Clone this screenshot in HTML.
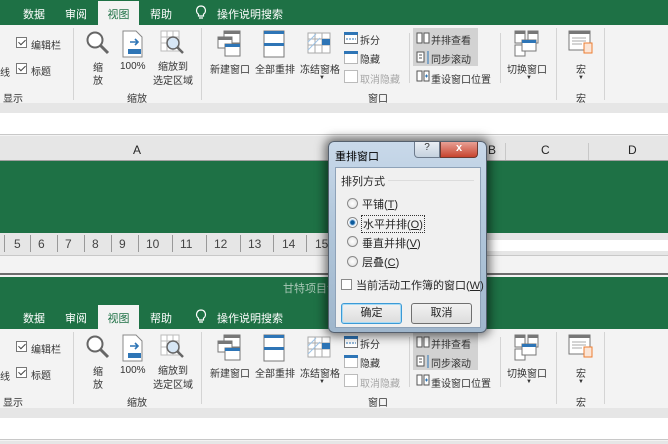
<!DOCTYPE html>
<html><head><meta charset="utf-8"><style>
*{margin:0;padding:0;box-sizing:border-box}
body{width:668px;height:444px;overflow:hidden;position:relative;background:#f3f3f3;font-family:"Liberation Sans","Noto Sans CJK SC",sans-serif;font-size:11px;color:#262626}
.a{position:absolute;white-space:nowrap}
.g{background:#1e7145}
.rb{position:absolute;left:0;width:668px;height:104px}
.tabs{position:absolute;left:0;top:0;width:668px;height:25px;background:#1e7145;color:#fff;font-size:11px}
.tabs span{position:absolute;top:6px}
.sel{position:absolute;left:98px;top:1px;width:41px;height:24px;background:#f3f3f3;color:#1e7145;text-align:center;padding-top:5px}
.ri{position:absolute;left:0;top:25px;width:668px;height:78px;background:#f3f3f3;font-size:10px;color:#333}
.sep{position:absolute;top:3px;width:1px;height:72px;background:#d4d4d4}
.cb{position:absolute;width:11px;height:11px;border:1px solid #777;background:#fff}
.cb:after{content:"";position:absolute;left:3px;top:0px;width:3px;height:6px;border:solid #444;border-width:0 1px 1px 0;transform:rotate(45deg)}
.gray{color:#a6a6a6}
.dlg{position:absolute;left:328px;top:141px;width:159px;height:192px;border:1px solid #55606e;border-radius:6px;background:linear-gradient(#c9d9ea,#b3c8dc 40%,#9fb6cc);box-shadow:0 0 10px 3px rgba(0,0,0,.55)}
.rd{position:absolute;width:11px;height:11px;border-radius:50%;border:1px solid #8a8a8a;background:radial-gradient(#fff,#ddd)}
.btn{position:absolute;width:61px;height:21px;border:1px solid #707070;border-radius:3px;background:linear-gradient(#f2f2f2,#dcdcdc);text-align:center;line-height:19px;font-size:11px}
.dd{font-size:6px}
</style></head><body>

<div class="rb" style="top:0">
 <div class="tabs"><span style="left:23px">数据</span><span style="left:65px">审阅</span><div class="sel">视图</div><span style="left:150px">帮助</span><svg class="a" style="left:195px;top:5px" width="12" height="16"><path d="M6 1a4.5 4.5 0 0 0-2.5 8.2V11h5V9.2A4.5 4.5 0 0 0 6 1zM4 13h4" stroke="#fff" fill="none" stroke-width="1.2"/></svg><span style="left:217px">操作说明搜索</span></div>
 <div class="ri">
  <span class="a" style="left:0;top:39px">线</span>
  <div class="cb" style="left:16px;top:12px"></div><span class="a" style="left:31px;top:12px">编辑栏</span>
  <div class="cb" style="left:16px;top:38px"></div><span class="a" style="left:31px;top:38px">标题</span>
  <span class="a" style="left:3px;top:65px">显示</span>
  <div class="sep" style="left:73px"></div>
  <svg class="a" style="left:85px;top:5px" width="26" height="26"><circle cx="10" cy="10" r="7.5" fill="#fff" stroke="#666" stroke-width="2"/><path d="M15 15 L23 23" stroke="#666" stroke-width="3"/></svg>
  <span class="a" style="left:93px;top:37px;line-height:13px">缩<br>放</span>
  <svg class="a" style="left:121px;top:5px" width="24" height="28"><path d="M2 1h13l6 6v20H2z" fill="#fff" stroke="#888"/><path d="M9 12h8m-3-3 3 3-3 3" stroke="#2e75b6" stroke-width="1.6" fill="none"/><rect x="7" y="19" width="13" height="5" fill="#2e75b6"/></svg>
  <span class="a" style="left:120px;top:36px">100%</span>
  <svg class="a" style="left:160px;top:5px" width="26" height="26"><path d="M1 1h18v20H1z M1 7h18 M1 13h18 M7 1v20 M13 1v20" stroke="#bbb" fill="#fff"/><circle cx="13" cy="13" r="6" fill="#d6e6f5" stroke="#666" stroke-width="1.5"/><path d="M17 17l6 6" stroke="#666" stroke-width="2.5"/></svg>
  <span class="a" style="left:153px;top:36px;line-height:14px;text-align:center">缩放到<br>选定区域</span>
  <span class="a" style="left:127px;top:65px">缩放</span>
  <div class="sep" style="left:201px"></div>
  <svg class="a" style="left:217px;top:5px" width="25" height="27"><rect x="7" y="1" width="16" height="12" fill="#fff" stroke="#777"/><rect x="7" y="1" width="16" height="3" fill="#777"/><rect x="1" y="7" width="14" height="11" fill="#fff" stroke="#777"/><rect x="1" y="7" width="14" height="3" fill="#777"/><rect x="8" y="14" width="15" height="12" fill="#fff" stroke="#777"/><rect x="8" y="14" width="15" height="3" fill="#2e75b6"/></svg>
  <span class="a" style="left:210px;top:36px">新建窗口</span>
  <svg class="a" style="left:263px;top:5px" width="22" height="28"><rect x="1" y="1" width="20" height="26" fill="#fff" stroke="#777"/><rect x="1" y="1" width="20" height="3" fill="#2e75b6"/><rect x="1" y="13" width="20" height="3" fill="#2e75b6"/></svg>
  <span class="a" style="left:255px;top:36px">全部重排</span>
  <svg class="a" style="left:307px;top:5px" width="24" height="26"><path d="M1 3h22v20H1z M1 9h22 M1 15h22 M8 3v20 M15 3v20" stroke="#aaa" fill="#fff"/><rect x="15" y="9" width="8" height="6" fill="#2e75b6"/><path d="M1 12l8-8M1 20l12-12" stroke="#9ec3e6"/></svg>
  <span class="a" style="left:300px;top:36px">冻结窗格</span><span class="a dd" style="left:319px;top:50px">▼</span>
  <svg class="a" style="left:344px;top:7px" width="14" height="12"><rect x=".5" y=".5" width="13" height="11" fill="#fff" stroke="#777"/><rect x="0" y="0" width="14" height="3" fill="#2e75b6"/><path d="M2 7h10" stroke="#2e75b6" stroke-dasharray="2 1"/></svg><span class="a" style="left:360px;top:7px">拆分</span>
  <svg class="a" style="left:344px;top:26px" width="14" height="13"><rect x=".5" y=".5" width="13" height="12" fill="#fff" stroke="#777" stroke-dasharray="1 1"/><rect x="0" y="0" width="14" height="3" fill="#2e75b6"/></svg><span class="a" style="left:360px;top:26px">隐藏</span>
  <svg class="a" style="left:344px;top:45px" width="14" height="13"><rect x=".5" y=".5" width="13" height="12" fill="#fff" stroke="#bbb"/></svg><span class="a gray" style="left:360px;top:46px">取消隐藏</span>
  <span class="a" style="left:368px;top:65px">窗口</span>
  <div class="sep" style="left:409px;height:50px;top:8px"></div>
  <div class="a" style="left:413px;top:3px;width:65px;height:38px;background:#d2d2d2"></div>
  <svg class="a" style="left:416px;top:7px" width="14" height="12"><path d="M1 1h5v10H1zM8 1h5v10H8z" fill="#fff" stroke="#555"/></svg><span class="a" style="left:431px;top:7px">并排查看</span>
  <svg class="a" style="left:416px;top:26px" width="14" height="13"><path d="M1 1h7v10H1z" fill="#fff" stroke="#555"/><path d="M3 4h3M3 7h3" stroke="#555"/><path d="M12 0v13" stroke="#2e75b6"/></svg><span class="a" style="left:431px;top:26px">同步滚动</span>
  <svg class="a" style="left:416px;top:45px" width="14" height="12"><path d="M1 1h5v10H1zM8 1h5v10H8z" fill="#fff" stroke="#555"/><path d="M9 6h3M10.5 4.5v3" stroke="#2e75b6"/></svg><span class="a" style="left:431px;top:46px">重设窗口位置</span>
  <div class="sep" style="left:500px;height:50px;top:8px"></div>
  <svg class="a" style="left:514px;top:5px" width="25" height="27"><rect x="1" y="1" width="10" height="12" fill="#fff" stroke="#777"/><rect x="1" y="1" width="10" height="3" fill="#777"/><rect x="14" y="1" width="10" height="12" fill="#fff" stroke="#777"/><rect x="14" y="1" width="10" height="3" fill="#777"/><rect x="1" y="15" width="10" height="11" fill="#fff" stroke="#777"/><rect x="8" y="10" width="14" height="11" fill="#fff" stroke="#777"/><rect x="8" y="10" width="14" height="3" fill="#2e75b6"/></svg>
  <span class="a" style="left:507px;top:36px">切换窗口</span><span class="a dd" style="left:526px;top:50px">▼</span>
  <div class="sep" style="left:556px"></div>
  <svg class="a" style="left:568px;top:5px" width="26" height="26"><rect x="1" y="1" width="21" height="19" fill="#fff" stroke="#777"/><rect x="1" y="1" width="21" height="3" fill="#777"/><path d="M4 8h14M4 11h14M4 14h10" stroke="#aaa"/><path d="M16 13h8v10h-8z" fill="#fbe5d6" stroke="#ed7d31"/></svg>
  <span class="a" style="left:576px;top:36px">宏</span><span class="a dd" style="left:578px;top:50px">▼</span>
  <span class="a" style="left:576px;top:65px">宏</span>
  <div class="sep" style="left:604px"></div>
 </div>
</div>

<div class="a" style="left:0;top:103px;width:668px;height:10px;background:#e6e6e6"></div>
<div class="a" style="left:0;top:113px;width:668px;height:22px;background:#fff;border-bottom:1px solid #c8c8c8"></div>
<div class="a" style="left:0;top:136px;width:668px;height:25px;background:#e6e6e6;border-bottom:1px solid #a0a0a0"></div>
<span class="a" style="left:133px;top:143px;font-size:12px">A</span>
<span class="a" style="left:488px;top:143px;font-size:12px">B</span>
<div class="a" style="left:505px;top:143px;width:1px;height:17px;background:#c8c8c8"></div>
<span class="a" style="left:541px;top:143px;font-size:12px">C</span>
<div class="a" style="left:588px;top:143px;width:1px;height:17px;background:#c8c8c8"></div>
<span class="a" style="left:628px;top:143px;font-size:12px">D</span>
<div class="a g" style="left:0;top:161px;width:668px;height:72px"></div>
<div class="a" style="left:0;top:233px;width:668px;height:23px;background:#e6e6e6;border-bottom:1px solid #c8c8c8;font-size:12px;color:#444">
 <span class="a" style="left:14px;top:4px">5</span><span class="a" style="left:38px;top:4px">6</span><span class="a" style="left:65px;top:4px">7</span><span class="a" style="left:92px;top:4px">8</span><span class="a" style="left:119px;top:4px">9</span><span class="a" style="left:146px;top:4px">10</span><span class="a" style="left:180px;top:4px">11</span><span class="a" style="left:214px;top:4px">12</span><span class="a" style="left:248px;top:4px">13</span><span class="a" style="left:282px;top:4px">14</span><span class="a" style="left:315px;top:4px">15</span>
 <div class="a" style="left:4px;top:2px;width:1px;height:17px;background:#999"></div><div class="a" style="left:30px;top:2px;width:1px;height:17px;background:#999"></div><div class="a" style="left:57px;top:2px;width:1px;height:17px;background:#999"></div><div class="a" style="left:84px;top:2px;width:1px;height:17px;background:#999"></div><div class="a" style="left:111px;top:2px;width:1px;height:17px;background:#999"></div><div class="a" style="left:138px;top:2px;width:1px;height:17px;background:#999"></div><div class="a" style="left:172px;top:2px;width:1px;height:17px;background:#999"></div><div class="a" style="left:206px;top:2px;width:1px;height:17px;background:#999"></div><div class="a" style="left:240px;top:2px;width:1px;height:17px;background:#999"></div><div class="a" style="left:273px;top:2px;width:1px;height:17px;background:#999"></div><div class="a" style="left:306px;top:2px;width:1px;height:17px;background:#999"></div>
 <div class="a" style="left:487px;top:7px;width:181px;height:11px;background:#fff"></div>
</div>
<div class="a" style="left:0;top:257px;width:668px;height:18px;background:#f3f3f3;border-bottom:2px solid #6d6d6d"></div>
<div class="a g" style="left:0;top:277px;width:668px;height:30px"></div>
<span class="a" style="left:283px;top:280px;color:#a9c7b6;font-size:11px">甘特项目计</span>

<div class="rb" style="top:304px">
 <div class="tabs"><span style="left:23px">数据</span><span style="left:65px">审阅</span><div class="sel">视图</div><span style="left:150px">帮助</span><svg class="a" style="left:195px;top:5px" width="12" height="16"><path d="M6 1a4.5 4.5 0 0 0-2.5 8.2V11h5V9.2A4.5 4.5 0 0 0 6 1zM4 13h4" stroke="#fff" fill="none" stroke-width="1.2"/></svg><span style="left:217px">操作说明搜索</span></div>
 <div class="ri">
  <span class="a" style="left:0;top:39px">线</span>
  <div class="cb" style="left:16px;top:12px"></div><span class="a" style="left:31px;top:12px">编辑栏</span>
  <div class="cb" style="left:16px;top:38px"></div><span class="a" style="left:31px;top:38px">标题</span>
  <span class="a" style="left:3px;top:65px">显示</span>
  <div class="sep" style="left:73px"></div>
  <svg class="a" style="left:85px;top:5px" width="26" height="26"><circle cx="10" cy="10" r="7.5" fill="#fff" stroke="#666" stroke-width="2"/><path d="M15 15 L23 23" stroke="#666" stroke-width="3"/></svg>
  <span class="a" style="left:93px;top:37px;line-height:13px">缩<br>放</span>
  <svg class="a" style="left:121px;top:5px" width="24" height="28"><path d="M2 1h13l6 6v20H2z" fill="#fff" stroke="#888"/><path d="M9 12h8m-3-3 3 3-3 3" stroke="#2e75b6" stroke-width="1.6" fill="none"/><rect x="7" y="19" width="13" height="5" fill="#2e75b6"/></svg>
  <span class="a" style="left:120px;top:36px">100%</span>
  <svg class="a" style="left:160px;top:5px" width="26" height="26"><path d="M1 1h18v20H1z M1 7h18 M1 13h18 M7 1v20 M13 1v20" stroke="#bbb" fill="#fff"/><circle cx="13" cy="13" r="6" fill="#d6e6f5" stroke="#666" stroke-width="1.5"/><path d="M17 17l6 6" stroke="#666" stroke-width="2.5"/></svg>
  <span class="a" style="left:153px;top:36px;line-height:14px;text-align:center">缩放到<br>选定区域</span>
  <span class="a" style="left:127px;top:65px">缩放</span>
  <div class="sep" style="left:201px"></div>
  <svg class="a" style="left:217px;top:5px" width="25" height="27"><rect x="7" y="1" width="16" height="12" fill="#fff" stroke="#777"/><rect x="7" y="1" width="16" height="3" fill="#777"/><rect x="1" y="7" width="14" height="11" fill="#fff" stroke="#777"/><rect x="1" y="7" width="14" height="3" fill="#777"/><rect x="8" y="14" width="15" height="12" fill="#fff" stroke="#777"/><rect x="8" y="14" width="15" height="3" fill="#2e75b6"/></svg>
  <span class="a" style="left:210px;top:36px">新建窗口</span>
  <svg class="a" style="left:263px;top:5px" width="22" height="28"><rect x="1" y="1" width="20" height="26" fill="#fff" stroke="#777"/><rect x="1" y="1" width="20" height="3" fill="#2e75b6"/><rect x="1" y="13" width="20" height="3" fill="#2e75b6"/></svg>
  <span class="a" style="left:255px;top:36px">全部重排</span>
  <svg class="a" style="left:307px;top:5px" width="24" height="26"><path d="M1 3h22v20H1z M1 9h22 M1 15h22 M8 3v20 M15 3v20" stroke="#aaa" fill="#fff"/><rect x="15" y="9" width="8" height="6" fill="#2e75b6"/><path d="M1 12l8-8M1 20l12-12" stroke="#9ec3e6"/></svg>
  <span class="a" style="left:300px;top:36px">冻结窗格</span><span class="a dd" style="left:319px;top:50px">▼</span>
  <svg class="a" style="left:344px;top:7px" width="14" height="12"><rect x=".5" y=".5" width="13" height="11" fill="#fff" stroke="#777"/><rect x="0" y="0" width="14" height="3" fill="#2e75b6"/><path d="M2 7h10" stroke="#2e75b6" stroke-dasharray="2 1"/></svg><span class="a" style="left:360px;top:7px">拆分</span>
  <svg class="a" style="left:344px;top:26px" width="14" height="13"><rect x=".5" y=".5" width="13" height="12" fill="#fff" stroke="#777" stroke-dasharray="1 1"/><rect x="0" y="0" width="14" height="3" fill="#2e75b6"/></svg><span class="a" style="left:360px;top:26px">隐藏</span>
  <svg class="a" style="left:344px;top:45px" width="14" height="13"><rect x=".5" y=".5" width="13" height="12" fill="#fff" stroke="#bbb"/></svg><span class="a gray" style="left:360px;top:46px">取消隐藏</span>
  <span class="a" style="left:368px;top:65px">窗口</span>
  <div class="sep" style="left:409px;height:50px;top:8px"></div>
  <div class="a" style="left:413px;top:3px;width:65px;height:38px;background:#d2d2d2"></div>
  <svg class="a" style="left:416px;top:7px" width="14" height="12"><path d="M1 1h5v10H1zM8 1h5v10H8z" fill="#fff" stroke="#555"/></svg><span class="a" style="left:431px;top:7px">并排查看</span>
  <svg class="a" style="left:416px;top:26px" width="14" height="13"><path d="M1 1h7v10H1z" fill="#fff" stroke="#555"/><path d="M3 4h3M3 7h3" stroke="#555"/><path d="M12 0v13" stroke="#2e75b6"/></svg><span class="a" style="left:431px;top:26px">同步滚动</span>
  <svg class="a" style="left:416px;top:45px" width="14" height="12"><path d="M1 1h5v10H1zM8 1h5v10H8z" fill="#fff" stroke="#555"/><path d="M9 6h3M10.5 4.5v3" stroke="#2e75b6"/></svg><span class="a" style="left:431px;top:46px">重设窗口位置</span>
  <div class="sep" style="left:500px;height:50px;top:8px"></div>
  <svg class="a" style="left:514px;top:5px" width="25" height="27"><rect x="1" y="1" width="10" height="12" fill="#fff" stroke="#777"/><rect x="1" y="1" width="10" height="3" fill="#777"/><rect x="14" y="1" width="10" height="12" fill="#fff" stroke="#777"/><rect x="14" y="1" width="10" height="3" fill="#777"/><rect x="1" y="15" width="10" height="11" fill="#fff" stroke="#777"/><rect x="8" y="10" width="14" height="11" fill="#fff" stroke="#777"/><rect x="8" y="10" width="14" height="3" fill="#2e75b6"/></svg>
  <span class="a" style="left:507px;top:36px">切换窗口</span><span class="a dd" style="left:526px;top:50px">▼</span>
  <div class="sep" style="left:556px"></div>
  <svg class="a" style="left:568px;top:5px" width="26" height="26"><rect x="1" y="1" width="21" height="19" fill="#fff" stroke="#777"/><rect x="1" y="1" width="21" height="3" fill="#777"/><path d="M4 8h14M4 11h14M4 14h10" stroke="#aaa"/><path d="M16 13h8v10h-8z" fill="#fbe5d6" stroke="#ed7d31"/></svg>
  <span class="a" style="left:576px;top:36px">宏</span><span class="a dd" style="left:578px;top:50px">▼</span>
  <span class="a" style="left:576px;top:65px">宏</span>
  <div class="sep" style="left:604px"></div>
 </div>
</div>
<div class="a" style="left:0;top:408px;width:668px;height:10px;background:#e6e6e6"></div>
<div class="a" style="left:0;top:418px;width:668px;height:22px;background:#fff;border-bottom:1px solid #c8c8c8"></div>
<div class="a" style="left:0;top:441px;width:668px;height:3px;background:#e6e6e6"></div>

<div class="dlg">
 <span class="a" style="left:6px;top:6px;font-size:11px;color:#000">重排窗口</span>
 <div class="a" style="left:85px;top:0;width:26px;height:16px;border:1px solid #6d7b8d;border-top:none;border-radius:0 0 0 4px;background:linear-gradient(#e9eef4,#c5d2df);text-align:center;font-size:10px;color:#333">?</div>
 <div class="a" style="left:111px;top:0;width:38px;height:16px;border:1px solid #6d3a32;border-top:none;border-radius:0 0 4px 0;background:linear-gradient(#e8a095,#c7442f);text-align:center;color:#fff;font-weight:bold;font-size:11px">x</div>
 <div class="a" style="left:6px;top:25px;width:146px;height:161px;background:#f0f0f0;border:1px solid #8ea2b8">
  <span class="a" style="left:5px;top:5px">排列方式</span>
  <div class="a" style="left:52px;top:12px;width:86px;height:1px;background:#dcdcdc"></div>
  <div class="rd" style="left:11px;top:30px"></div><span class="a" style="left:26px;top:28px">平铺(<u>T</u>)</span>
  <div class="rd" style="left:11px;top:49px;background:radial-gradient(#0b5a9c 30%,#9dc3e6 40%,#fff 60%)"></div><span class="a" style="left:25px;top:47px;border:1px dotted #333;padding:0 1px">水平并排(<u>O</u>)</span>
  <div class="rd" style="left:11px;top:68px"></div><span class="a" style="left:26px;top:67px">垂直并排(<u>V</u>)</span>
  <div class="rd" style="left:11px;top:88px"></div><span class="a" style="left:26px;top:86px">层叠(<u>C</u>)</span>
  <div class="a" style="left:5px;top:111px;width:11px;height:11px;border:1px solid #8a8a8a;background:#fff"></div><span class="a" style="left:20px;top:109px">当前活动工作簿的窗口(<u>W</u>)</span>
  <div class="btn" style="left:5px;top:135px;border-color:#3c9ad6;box-shadow:inset 0 0 0 1px #a8dbf5">确定</div>
  <div class="btn" style="left:75px;top:135px">取消</div>
 </div>
</div>
</body></html>
